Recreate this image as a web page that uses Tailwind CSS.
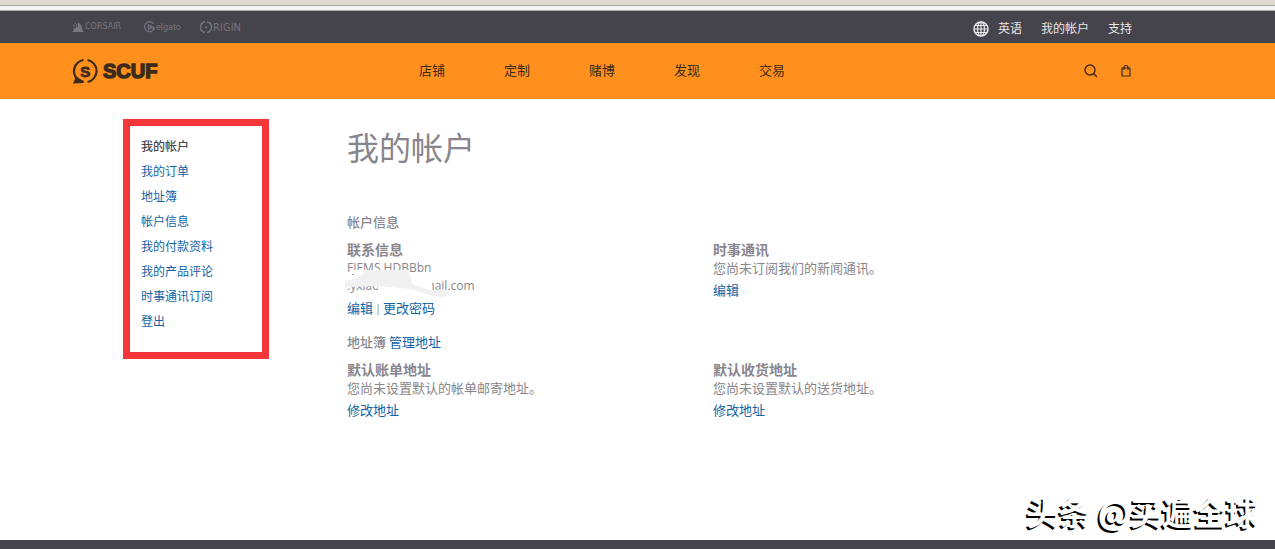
<!DOCTYPE html>
<html lang="zh-CN">
<head>
<meta charset="utf-8">
<meta name="viewport" content="width=device-width, initial-scale=1">
<title>我的帐户</title>
<script src="https://cdn.jsdelivr.net/npm/@tailwindcss/browser@4"></script>
</head>
<body class="relative flex min-h-screen flex-col bg-white font-['Open_Sans','Noto_Sans_CJK_SC',sans-serif] text-[13px] text-[#88868c]">
<div class="h-[11px] border-b border-[#aaaaab] bg-[#f5f5f5]"><div class="h-[6px] border-b border-[#a9a69c] bg-[#dddacf]"></div></div>

<div class="flex h-8 items-center bg-[#45434b] pr-[143px] pl-[72px]">
  <div class="flex items-center text-[#77757e]">
    <a href="#" aria-label="Corsair" class="w-[72px]">
      <svg width="52" height="14" viewBox="0 0 52 14" fill="currentColor">
        <path d="M0 12C2 11 2 9 1.500 7l2 2L4 5l1.500 3L6 2l3 3 2 6 1 1z"/><path d="M1 5l2 1M3 3l2 2" stroke="currentColor"/>
        <text x="13" y="9" font-family="DejaVu Sans" font-size="8">CORSAIR</text>
      </svg>
    </a>
    <a href="#" aria-label="Elgato" class="w-[56px]">
      <svg width="38" height="14" viewBox="0 0 38 14" fill="none" stroke="currentColor">
        <path d="M9.500 3.500A5 5 0 1 0 10.500 8H8M4.500 4.800l4 2.200-4 2.300z" stroke-width="1.200"/>
        <text x="12" y="10" font-family="Roboto" font-size="9" fill="currentColor" stroke="none">elgato</text>
      </svg>
    </a>
    <a href="#" aria-label="Origin">
      <svg width="42" height="14" viewBox="0 0 42 14" fill="currentColor">
        <path d="M5 2a5.200 5.200 0 0 0 0 10.300M7 2a5.200 5.200 0 0 1 0 10.300" fill="none" stroke="currentColor" stroke-width="1.300"/><circle cx="6" cy="7.200" r="1"/>
        <text x="13" y="11" font-family="DejaVu Sans" font-size="10">RIGIN</text>
      </svg>
    </a>
  </div>
  <div class="ml-auto flex items-center pt-1 text-xs leading-5 text-[#e8e7ea]">
    <a href="#" class="flex items-center gap-[9px]">
      <svg width="16" height="16" viewBox="0 0 16 16" fill="none" stroke="currentColor" stroke-width="1.200"><circle cx="8" cy="8" r="7" stroke-width="1.500"/><ellipse cx="8" cy="8" rx="3.500" ry="7"/><path d="M8 1v14M1 8h14M2 4.500h12M2 11.500h12"/></svg>
      英语</a>
    <a href="#" class="ml-[19px]">我的帐户</a>
    <a href="#" class="ml-[19px]">支持</a>
  </div>
</div>

<header class="flex h-14 items-center bg-[#ff901e] pr-[143px] pl-[72px] text-[#3c2a1b]">
  <a href="#" aria-label="SCUF" class="w-[347px]">
    <svg width="88" height="28" viewBox="0 0 88 28" fill="currentColor">
      <path d="M11.500 3A11.300 11.300 0 0 0 4 20.500M15.500 3a11.200 11.200 0 0 1 0 22M11.500 25l-5-2" fill="none" stroke="currentColor" stroke-width="2.200"/>
      <path d="M2.500 18l7 5 2 1v2L1 26.500 3 22z"/>
      <text x="8.200" y="19.500" font-family="Liberation Sans" font-weight="700" font-size="15" stroke="currentColor" stroke-width=".8">S</text>
      <text x="31" y="21" font-family="Liberation Sans" font-weight="700" font-size="20" stroke="currentColor" stroke-width="1.400">SCUF</text>
    </svg>
  </a>
  <nav class="flex gap-[59px] pb-[2px] leading-5">
    <a href="#">店铺</a><a href="#">定制</a><a href="#">赌博</a><a href="#">发现</a><a href="#">交易</a>
  </nav>
  <div class="ml-auto flex items-center gap-[23px]">
    <button type="button" aria-label="搜索"><svg class="block" width="14" height="14" viewBox="0 0 14 14" fill="none" stroke="currentColor" stroke-width="1.400"><circle cx="6" cy="6" r="5"/><path d="M9.500 9.500L13 13"/></svg></button>
    <button type="button" aria-label="购物袋" class="pr-px"><svg class="block" width="10" height="14" viewBox="0 0 10 14" fill="none" stroke="currentColor" stroke-width="1.200"><path d="M1 4h8v8H1zM3 6V3.500C3 .8 7 .8 7 3.500V6"/></svg></button>
  </div>
</header>

<div class="flex flex-1 items-start pt-5 pb-10 pl-[123px]">
  <aside class="h-60 w-[146px] shrink-0 border-7 border-[#f4363b] pt-2 pl-[11px]">
    <ul class="text-xs leading-[25px] text-[#1263a4]">
      <li class="font-medium text-[#4a494e]">我的帐户</li>
      <li><a href="#">我的订单</a></li>
      <li><a href="#">地址簿</a></li>
      <li><a href="#">帐户信息</a></li>
      <li><a href="#">我的付款资料</a></li>
      <li><a href="#">我的产品评论</a></li>
      <li><a href="#">时事通讯订阅</a></li>
      <li><a href="#">登出</a></li>
    </ul>
  </aside>
  <main class="ml-[78px] flex-1 pt-[9px] leading-[18px]">
    <h1 class="mb-11 text-[32px] leading-10">我的帐户</h1>
    <h2 class="leading-5 font-medium">帐户信息</h2>
    <div class="mt-[9px] grid grid-cols-[366px_1fr]">
      <section>
        <h3 class="text-sm leading-[18px] font-bold">联系信息</h3>
        <div class="relative text-xs leading-[18px]">
          <p>FJEMS HDBBbn</p>
          <p>.yxiaoxxxxxxgmail.com</p>
          <svg class="absolute top-0 -left-1" width="108" height="40" viewBox="0 0 108 40"><path d="M11 11h55v8H11zM35 18h54v20H35z" fill="#fff"/><path d="M2 22l10-2 13-9h39l4 8 1 6 18 6 14-1q7 4 4 6l-5 2-10-1-22-7-33-3-33 1z" fill="#f1f1f2"/></svg>
        </div>
        <p class="mt-[3px] flex gap-[2px] leading-5"><a href="#" class="text-[#1263a4]">编辑</a><span class="text-[11px]">|</span><a href="#" class="text-[#1263a4]">更改密码</a></p>
      </section>
      <section>
        <h3 class="text-sm leading-[18px] font-bold">时事通讯</h3>
        <p>您尚未订阅我们的新闻通讯。</p>
        <p class="mt-[3px] leading-5"><a href="#" class="text-[#1263a4]">编辑</a></p>
      </section>
    </div>
    <div class="mt-[14px] flex gap-[3px] leading-5"><h2 class="font-medium">地址簿</h2><a href="#" class="text-[#1263a4]">管理地址</a></div>
    <div class="mt-[9px] grid grid-cols-[366px_1fr]">
      <section>
        <h3 class="text-sm leading-[18px] font-bold">默认账单地址</h3>
        <p>您尚未设置默认的帐单邮寄地址。</p>
        <p class="mt-[3px] leading-5"><a href="#" class="text-[#1263a4]">修改地址</a></p>
      </section>
      <section>
        <h3 class="text-sm leading-[18px] font-bold">默认收货地址</h3>
        <p>您尚未设置默认的送货地址。</p>
        <p class="mt-[3px] leading-5"><a href="#" class="text-[#1263a4]">修改地址</a></p>
      </section>
    </div>
  </main>
</div>
<footer class="h-[9px] bg-[#45434b]"></footer>
<div class="absolute right-[17px] bottom-[18px] font-['Noto_Sans_CJK_SC',sans-serif] text-[32px] leading-10 font-bold text-white [text-shadow:-2px_2px_0_#000]">头条 @买遍全球</div>
</body>
</html>
